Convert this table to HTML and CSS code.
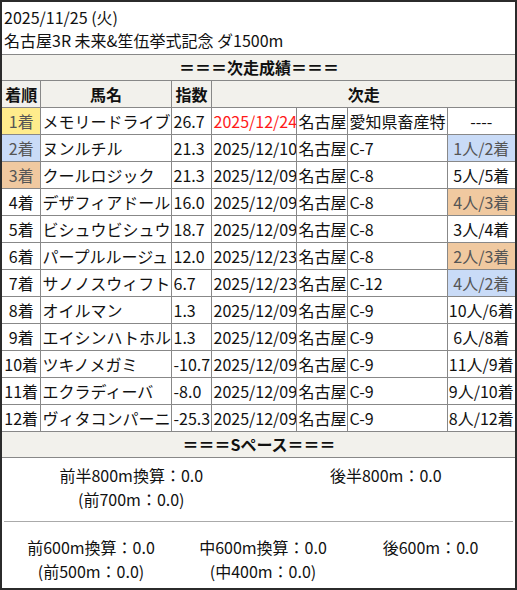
FILE: index.html
```html
<!DOCTYPE html>
<html lang="ja">
<head>
<meta charset="utf-8">
<link rel="stylesheet" href="styles.css">
</head>
<body>
<div class="frame">
  <div class="title">
    <div>2025/11/25 (火)</div>
    <div>名古屋3R 未来&amp;笙伍挙式記念 ダ1500m</div>
  </div>
  <table class="results">
    <colgroup>
      <col class="c-rank"><col class="c-name"><col class="c-idx"><col class="c-date"><col class="c-venue"><col class="c-race"><col class="c-res">
    </colgroup>
    <tr class="bar"><th colspan="7">＝＝＝次走成績＝＝＝</th></tr>
    <tr class="head"><th>着順</th><th>馬名</th><th>指数</th><th colspan="4">次走</th></tr>
    <tr><td class="rank gold">1着</td><td>メモリードライブ</td><td>26.7</td><td class="red">2025/12/24</td><td>名古屋</td><td>愛知県畜産特</td><td class="res">----</td></tr>
    <tr><td class="rank blue">2着</td><td>ヌンルチル</td><td>21.3</td><td>2025/12/10</td><td>名古屋</td><td>C-7</td><td class="res blue">1人/2着</td></tr>
    <tr><td class="rank peach">3着</td><td>クールロジック</td><td>21.3</td><td>2025/12/09</td><td>名古屋</td><td>C-8</td><td class="res">5人/5着</td></tr>
    <tr><td class="rank">4着</td><td>デザフィアドール</td><td>16.0</td><td>2025/12/09</td><td>名古屋</td><td>C-8</td><td class="res peach">4人/3着</td></tr>
    <tr><td class="rank">5着</td><td>ビシュウビシュウ</td><td>18.7</td><td>2025/12/09</td><td>名古屋</td><td>C-8</td><td class="res">3人/4着</td></tr>
    <tr><td class="rank">6着</td><td>パープルルージュ</td><td>12.0</td><td>2025/12/23</td><td>名古屋</td><td>C-8</td><td class="res peach">2人/3着</td></tr>
    <tr><td class="rank">7着</td><td>サノノスウィフト</td><td>6.7</td><td>2025/12/23</td><td>名古屋</td><td>C-12</td><td class="res blue">4人/2着</td></tr>
    <tr><td class="rank">8着</td><td>オイルマン</td><td>1.3</td><td>2025/12/09</td><td>名古屋</td><td>C-9</td><td class="res">10人/6着</td></tr>
    <tr><td class="rank">9着</td><td>エイシンハトホル</td><td>1.3</td><td>2025/12/09</td><td>名古屋</td><td>C-9</td><td class="res">6人/8着</td></tr>
    <tr><td class="rank">10着</td><td>ツキノメガミ</td><td>-10.7</td><td>2025/12/09</td><td>名古屋</td><td>C-9</td><td class="res">11人/9着</td></tr>
    <tr><td class="rank">11着</td><td>エクラディーバ</td><td>-8.0</td><td>2025/12/09</td><td>名古屋</td><td>C-9</td><td class="res">9人/10着</td></tr>
    <tr><td class="rank">12着</td><td>ヴィタコンパーニ</td><td>-25.3</td><td>2025/12/09</td><td>名古屋</td><td>C-9</td><td class="res">8人/12着</td></tr>
    <tr class="bar"><th colspan="7">＝＝＝Sペース＝＝＝</th></tr>
    <tr>
      <td colspan="7" class="pace">
        <div class="pace-row two">
          <div class="pace-item"><div>前半800m換算：0.0</div><div>(前700m：0.0)</div></div>
          <div class="pace-item"><div>後半800m：0.0</div></div>
        </div>
        <hr class="sep">
        <div class="pace-row three">
          <div class="pace-item"><div>前600m換算：0.0</div><div>(前500m：0.0)</div></div>
          <div class="pace-item"><div>中600m換算：0.0</div><div>(中400m：0.0)</div></div>
          <div class="pace-item"><div>後600m：0.0</div></div>
        </div>
      </td>
    </tr>
  </table>
</div>
</body>
</html>
```

FILE: styles.css
```css
html, body {
  margin: 0;
  padding: 0;
  background: #ffffff;
}

body {
  font-family: "Noto Sans CJK JP", "Noto Sans", sans-serif;
  font-size: 16px;
  color: #111111;
}

.frame {
  box-sizing: border-box;
  width: 517px;
  height: 590px;
  border: 2px solid #2b2b2b;
  overflow: hidden;
  background: #ffffff;
}

.title {
  padding: 4px 2px 2px;
  line-height: 23px;
  border-bottom: 1px solid #888888;
}

.results {
  width: 513px;
  border-collapse: collapse;
  table-layout: fixed;
  border: hidden;
}

.c-rank { width: 38px; }
.c-name { width: 131px; }
.c-idx { width: 40px; }
.c-date { width: 85px; }
.c-venue { width: 51px; }
.c-race { width: 100px; }
.c-res { width: 68px; }

.results th,
.results td {
  border: 1px solid #888888;
  padding: 0 1px 0 2px;
  height: 26px;
  line-height: 23px;
  white-space: nowrap;
  overflow: hidden;
  text-align: left;
}

.results th {
  font-weight: bold;
  text-align: center;
  background: #f2f1ec;
}

.bar th {
  height: 25px;
}

.rank,
.res {
  text-align: center !important;
}

.results td.res {
  padding: 0;
}

.gold {
  background: #ffec8c;
  color: #555555;
}

.blue {
  background: #c9dbf7;
  color: #555555;
}

.peach {
  background: #f0c9a0;
  color: #555555;
}

.red {
  color: #ff1a1a;
}

.results td.pace {
  padding: 5px 2px 3px;
  height: auto;
  line-height: 24px;
  text-align: center;
}

.pace-row {
  display: grid;
}

.pace-row.two {
  grid-template-columns: 1fr 1fr;
}

.pace-row.three {
  grid-template-columns: 174px 170px 1fr;
}

.sep {
  border: 0;
  border-top: 1px solid #aaaaaa;
  margin: 10px 0 13px;
}
```
